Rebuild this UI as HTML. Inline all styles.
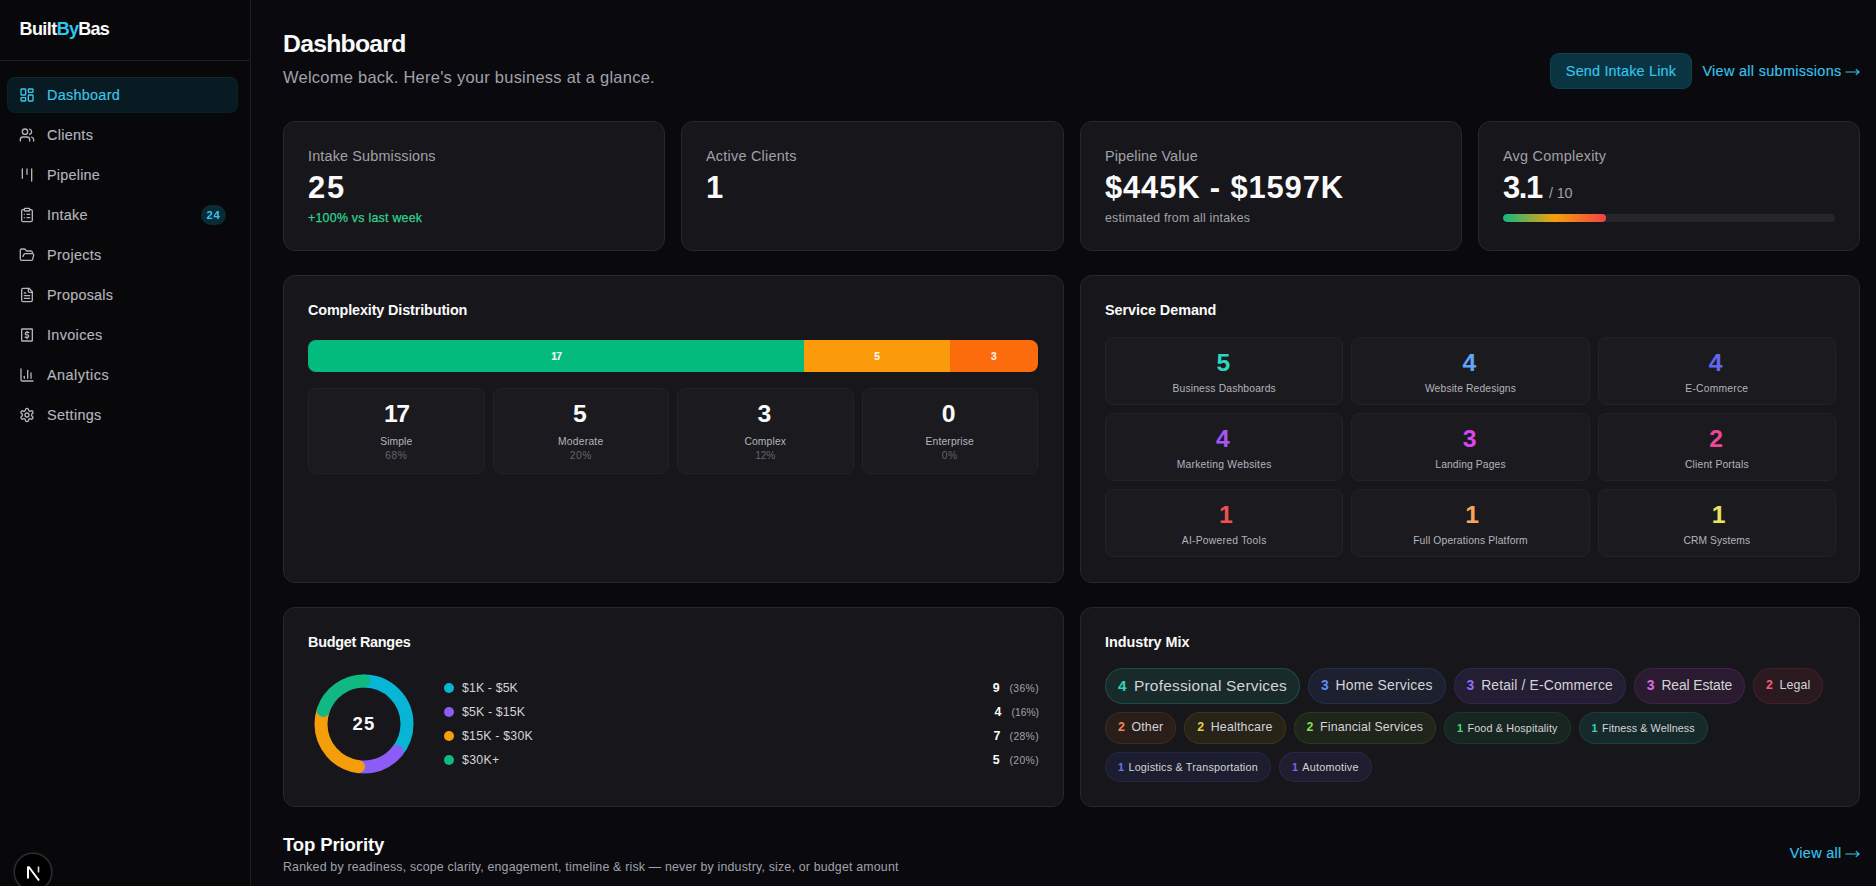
<!DOCTYPE html>
<html><head><meta charset="utf-8"><title>Dashboard</title>
<style>
*{box-sizing:border-box;margin:0;padding:0}
html,body{width:1876px;height:886px;overflow:hidden;background:#0a0a0e;font-family:"Liberation Sans",sans-serif;color:#fafafa}
.abs{position:absolute}
/* sidebar */
.sb{position:absolute;left:0;top:0;width:251px;height:886px;background:#08080b;border-right:1px solid #1d1d22}
.logo{position:absolute;left:19.5px;top:14.5px;height:28px;line-height:28px;font-size:18.03px;font-weight:700;letter-spacing:-0.3px;white-space:nowrap}
.logo .by{color:#2cc6ef}
.divh{position:absolute;left:0;top:60px;width:250px;height:1px;background:#1d1d22}
.nav{position:absolute;left:7px;top:77px;width:231px}
.ni{position:relative;height:36px;margin-bottom:4px;border-radius:8px;color:#b4b4bc}
.ni.act{background:#091b22;color:#3cc6e8;box-shadow:inset 0 1px 0 rgba(120,200,230,0.06),inset 0 0 0 1px rgba(34,211,238,0.03)}
.ni svg{position:absolute;left:12px;top:10px;width:16px;height:16px}
.ni .lb{position:absolute;left:40px;top:8px;line-height:20px;font-size:14.42px;font-weight:500;white-space:nowrap;-webkit-text-stroke:0.15px currentColor}
.badge{position:absolute;left:194px;top:8px;width:25px;height:20px;border-radius:10px;background:#0a2a34;color:#36c3ec;font-size:11.33px;font-weight:700;line-height:20px;text-align:center}
.nx{position:absolute;left:15px;top:854px;width:36px;height:36px;border-radius:50%;background:#000;box-shadow:0 0 0 1.5px #2c2c30,0 0 3px 1px rgba(60,60,66,0.5)}
/* main */
.h1{position:absolute;left:283px;top:28px;font-size:24.72px;line-height:32px;font-weight:700;letter-spacing:-0.6px;white-space:nowrap}
.sub{position:absolute;left:283px;top:64.5px;font-size:16.48px;line-height:24px;color:#a1a1aa;white-space:nowrap}
.btn{position:absolute;left:1550px;top:53px;width:142px;height:36px;border-radius:9px;background:#0b3442;box-shadow:inset 0 0 0 1px rgba(34,211,238,0.09);color:#36c3ec;-webkit-text-stroke:0.15px currentColor;font-size:14.42px;font-weight:500;line-height:36px;text-align:center;white-space:nowrap}
.lnk{position:absolute;right:16px;top:61px;font-size:14.42px;font-weight:500;line-height:20px;color:#36c3ec;-webkit-text-stroke:0.15px currentColor;white-space:nowrap}
.card{position:absolute;background:#17171b;border:1px solid #27272c;border-radius:12px}
.lab{font-size:14.42px;line-height:20px;color:#a1a1aa;white-space:nowrap}
.val{margin-top:4px;font-size:30.90px;line-height:36px;font-weight:700;white-space:nowrap}
.val small{font-size:14.42px;font-weight:400;color:#a1a1aa;margin-left:7px}
.note{margin-top:4px;font-size:12.36px;line-height:16px;color:#a1a1aa;white-space:nowrap}
.st{position:absolute;left:24px;top:24px}
.ttl{position:absolute;left:24px;top:24px;font-size:14.42px;line-height:20px;font-weight:600;white-space:nowrap}

.cbar{position:absolute;left:24px;top:64px;width:730px;height:32px;border-radius:8px;overflow:hidden;display:flex}
.cbar div{height:32px;text-align:center;font-size:10.30px;font-weight:700;line-height:34px;color:rgba(255,255,255,0.92);-webkit-text-stroke:0.2px currentColor}
.ctiles{position:absolute;left:24px;top:112px;width:730px;display:grid;grid-template-columns:repeat(4,1fr);gap:8px}
.ct{position:relative;height:86px;background:#1b1b1f;border:1px solid #232327;border-radius:8px;text-align:center}
.ct .n{position:absolute;left:0;right:0;top:9px;font-size:24.72px;line-height:32px;font-weight:700}
.ct .l{position:absolute;left:0;right:0;top:44.5px;font-size:10.30px;line-height:15px;color:#b4b4bc}
.ct .p{position:absolute;left:0;right:0;top:59px;font-size:10.30px;line-height:15px;color:#63636b}
.stiles{position:absolute;left:24px;top:61px;width:731px;display:grid;grid-template-columns:repeat(3,1fr);gap:8px}
.stl{position:relative;height:68px;background:#1b1b1f;border:1px solid #232327;border-radius:8px;text-align:center}
.stl .n{position:absolute;left:0;right:0;top:9px;font-size:24.72px;line-height:32px;font-weight:700}
.stl .l{position:absolute;left:0;right:0;top:42.5px;font-size:10.30px;line-height:15px;color:#b4b4bc;font-weight:500}
.leg{position:absolute;left:160px;top:67.5px;width:595px}
.lr{position:relative;height:24px}
.lr .d{position:absolute;left:0;top:7px;width:10px;height:10px;border-radius:50%}
.lr .t{position:absolute;left:18px;top:4px;font-size:12.36px;line-height:16px;color:#d4d4d8}
.lr .c{position:absolute;right:0;top:4px;line-height:16px;font-size:12.36px;white-space:nowrap}
.lr .c b{font-size:12.36px;font-weight:700;color:#fafafa}
.lr .c span{font-size:10.30px;color:#a1a1aa;margin-left:9px}
.pills{position:absolute;left:24px;top:60px;width:731px;display:flex;flex-wrap:wrap;gap:8px}
.pill{display:flex;align-items:center;gap:6px;padding:6px 12px;border-radius:9999px;border:1px solid;line-height:1.5;white-space:nowrap}
.pill b{font-weight:600}
.pill span{color:#d4d4d8}
.tp{position:absolute;left:283px;top:831px;font-size:18.54px;line-height:28px;font-weight:600;white-space:nowrap}
.tps{position:absolute;left:283px;top:859px;font-size:12.36px;line-height:16px;color:#a1a1aa;white-space:nowrap}
.va{position:absolute;right:16px;top:843px;font-size:14.42px;line-height:20px;font-weight:500;color:#36c3ec;-webkit-text-stroke:0.15px currentColor;white-space:nowrap}
.arr{display:inline-block;vertical-align:-1px;margin-left:3.5px}
.med{-webkit-text-stroke:0.15px currentColor}
</style></head>
<body>
<div class="sb">
  <div class="logo"><span style="letter-spacing: -0.572px;">Built</span><span class="by" style="letter-spacing: -0.738px;">By</span><span style="letter-spacing: -0.805px;">Bas</span></div>
  <div class="divh"></div>
  <div class="nav">
    <div class="ni act">
      <svg viewBox="0 0 24 24" fill="none" stroke="currentColor" stroke-width="2" stroke-linecap="round" stroke-linejoin="round"><rect x="3" y="3" width="7" height="9" rx="1"></rect><rect x="14" y="3" width="7" height="5" rx="1"></rect><rect x="14" y="12" width="7" height="9" rx="1"></rect><rect x="3" y="16" width="7" height="5" rx="1"></rect></svg>
      <span class="lb" style="letter-spacing: 0.281px;">Dashboard</span>
    </div>
    <div class="ni">
      <svg viewBox="0 0 24 24" fill="none" stroke="currentColor" stroke-width="2" stroke-linecap="round" stroke-linejoin="round"><path d="M16 21v-2a4 4 0 0 0-4-4H6a4 4 0 0 0-4 4v2"></path><circle cx="9" cy="7" r="4"></circle><path d="M22 21v-2a4 4 0 0 0-3-3.87"></path><path d="M16 3.13a4 4 0 0 1 0 7.75"></path></svg>
      <span class="lb" style="letter-spacing: 0.301px;">Clients</span>
    </div>
    <div class="ni">
      <svg viewBox="0 0 24 24" fill="none" stroke="currentColor" stroke-width="2" stroke-linecap="round" stroke-linejoin="round"><path d="M5 3v14"></path><path d="M12 3v8"></path><path d="M19 3v18"></path></svg>
      <span class="lb" style="letter-spacing: 0.229px;">Pipeline</span>
    </div>
    <div class="ni">
      <svg viewBox="0 0 24 24" fill="none" stroke="currentColor" stroke-width="2" stroke-linecap="round" stroke-linejoin="round"><rect x="8" y="2" width="8" height="4" rx="1"></rect><path d="M16 4h2a2 2 0 0 1 2 2v14a2 2 0 0 1-2 2H6a2 2 0 0 1-2-2V6a2 2 0 0 1 2-2h2"></path><path d="M12 11h4"></path><path d="M12 16h4"></path><path d="M8 11h.01"></path><path d="M8 16h.01"></path></svg>
      <span class="lb" style="letter-spacing: 0.253px;">Intake</span>
      <span class="badge" style="letter-spacing: 0.797px;">24</span>
    </div>
    <div class="ni">
      <svg viewBox="0 0 24 24" fill="none" stroke="currentColor" stroke-width="2" stroke-linecap="round" stroke-linejoin="round"><path d="m6 14 1.5-2.9A2 2 0 0 1 9.24 10H20a2 2 0 0 1 1.94 2.5l-1.54 6a2 2 0 0 1-1.95 1.5H4a2 2 0 0 1-2-2V5a2 2 0 0 1 2-2h3.9a2 2 0 0 1 1.69.9l.81 1.2a2 2 0 0 0 1.67.9H18a2 2 0 0 1 2 2v2"></path></svg>
      <span class="lb" style="letter-spacing: 0.32px;">Projects</span>
    </div>
    <div class="ni">
      <svg viewBox="0 0 24 24" fill="none" stroke="currentColor" stroke-width="2" stroke-linecap="round" stroke-linejoin="round"><path d="M15 2H6a2 2 0 0 0-2 2v16a2 2 0 0 0 2 2h12a2 2 0 0 0 2-2V7Z"></path><path d="M14 2v4a2 2 0 0 0 2 2h4"></path><path d="M10 9H8"></path><path d="M16 13H8"></path><path d="M16 17H8"></path></svg>
      <span class="lb" style="letter-spacing: 0.245px;">Proposals</span>
    </div>
    <div class="ni">
      <svg viewBox="0 0 24 24" fill="none" stroke="currentColor" stroke-width="2" stroke-linecap="round" stroke-linejoin="round"><rect x="4" y="3" width="16" height="18" rx="0.8"></rect><path d="M14.8 8.2h-3.6a1.8 1.8 0 0 0 0 3.6h1.6a1.8 1.8 0 0 1 0 3.6H9.2"></path><path d="M12 6.5v1.5"></path><path d="M12 15.5v2"></path></svg>
      <span class="lb" style="letter-spacing: 0.346px;">Invoices</span>
    </div>
    <div class="ni">
      <svg viewBox="0 0 24 24" fill="none" stroke="currentColor" stroke-width="2" stroke-linecap="round" stroke-linejoin="round"><path d="M3 3v16a2 2 0 0 0 2 2h16"></path><path d="M18 17V9"></path><path d="M13 17V5"></path><path d="M8 17v-3"></path></svg>
      <span class="lb" style="letter-spacing: 0.495px;">Analytics</span>
    </div>
    <div class="ni">
      <svg viewBox="0 0 24 24" fill="none" stroke="currentColor" stroke-width="2" stroke-linecap="round" stroke-linejoin="round"><path d="M12.22 2h-.44a2 2 0 0 0-2 2v.18a2 2 0 0 1-1 1.73l-.43.25a2 2 0 0 1-2 0l-.15-.08a2 2 0 0 0-2.73.73l-.22.38a2 2 0 0 0 .73 2.73l.15.1a2 2 0 0 1 1 1.72v.51a2 2 0 0 1-1 1.74l-.15.09a2 2 0 0 0-.73 2.73l.22.38a2 2 0 0 0 2.73.73l.15-.08a2 2 0 0 1 2 0l.43.25a2 2 0 0 1 1 1.73V20a2 2 0 0 0 2 2h.44a2 2 0 0 0 2-2v-.18a2 2 0 0 1 1-1.73l.43-.25a2 2 0 0 1 2 0l.15.08a2 2 0 0 0 2.73-.73l.22-.39a2 2 0 0 0-.73-2.73l-.15-.08a2 2 0 0 1-1-1.74v-.5a2 2 0 0 1 1-1.74l.15-.09a2 2 0 0 0 .73-2.73l-.22-.38a2 2 0 0 0-2.73-.73l-.15.08a2 2 0 0 1-2 0l-.43-.25a2 2 0 0 1-1-1.73V4a2 2 0 0 0-2-2z"></path><circle cx="12" cy="12" r="3"></circle></svg>
      <span class="lb" style="letter-spacing: 0.314px;">Settings</span>
    </div>
  </div>
  <div class="nx"><svg viewBox="0 0 37 37" width="37" height="37"><path d="M13 12.5v12" stroke="#fff" stroke-width="2" fill="none"></path><path d="M13.5 12.5l10.5 14" stroke="#fff" stroke-width="2" fill="none"></path><path d="M23.5 12.5v6" stroke="#ddd" stroke-width="1.6" fill="none"></path></svg></div>
</div>

<div class="h1" style="letter-spacing: -0.725px;">Dashboard</div>
<div class="sub" style="letter-spacing: 0.257px;">Welcome back. Here's your business at a glance.</div>
<div class="btn" style="letter-spacing: 0.184px;">Send Intake Link</div>
<div class="lnk"><span style="letter-spacing: 0.323px;">View all submissions</span><svg class="arr" width="15" height="10" viewBox="0 0 15 10"><path d="M0.5 5h13.8M10.8 2.2l3.3 2.8-3.3 2.8" stroke="currentColor" stroke-width="1.1" fill="none"></path></svg></div>

<!-- stat cards -->
<div class="card" style="left:283px;top:121px;width:382px;height:130px">
  <div class="st"><div class="lab" style="letter-spacing: 0.156px;">Intake Submissions</div><div class="val" style="letter-spacing: 1.852px;">25</div><div class="note" style="color: rgb(48, 207, 144); font-weight: 500; -webkit-text-stroke: 0.25px currentcolor; letter-spacing: 0.263px;">+100% vs last week</div></div>
</div>
<div class="card" style="left:681px;top:121px;width:383px;height:130px">
  <div class="st"><div class="lab" style="letter-spacing: 0.238px;">Active Clients</div><div class="val" style="letter-spacing: -4.25px;">1</div></div>
</div>
<div class="card" style="left:1080px;top:121px;width:382px;height:130px">
  <div class="st"><div class="lab" style="letter-spacing: 0.129px;">Pipeline Value</div><div class="val" style="letter-spacing: 0.872px;">$445K - $1597K</div><div class="note" style="letter-spacing: 0.19px;">estimated from all intakes</div></div>
</div>
<div class="card" style="left:1478px;top:121px;width:382px;height:130px">
  <div class="st"><div class="lab" style="letter-spacing: 0.247px;">Avg Complexity</div><div class="val"><span style="letter-spacing: -1.323px;">3.1</span><small style="letter-spacing: -0.129px;">/ 10</small></div></div>
  <div class="abs" style="left:24px;top:92px;width:332px;height:8px;border-radius:4px;background:#26262b;overflow:hidden"><div style="width:31%;height:8px;border-radius:4px;background:linear-gradient(90deg,#10b981,#f59e0b,#ef4444)"></div></div>
</div>


<!-- row 2 -->
<div class="card" style="left:283px;top:275px;width:781px;height:308px">
  <div class="ttl" style="letter-spacing: -0.141px;">Complexity Distribution</div>
  <div class="cbar"><div style="width: 68%; background: rgb(4, 187, 126); letter-spacing: -0.664px;">17</div><div style="width: 20%; background: rgb(251, 155, 11); letter-spacing: 0.672px;">5</div><div style="width: 12%; background: rgb(253, 108, 12); letter-spacing: 0.734px;">3</div></div>
  <div class="ctiles"><div class="ct"><div class="n" style="letter-spacing: -1.594px;">17</div><div class="l" style="letter-spacing: 0.083px;">Simple</div><div class="p" style="letter-spacing: 0.536px;">68%</div></div><div class="ct"><div class="n" style="letter-spacing: 1.594px;">5</div><div class="l" style="letter-spacing: 0.232px;">Moderate</div><div class="p" style="letter-spacing: 0.542px;">20%</div></div><div class="ct"><div class="n" style="letter-spacing: 1.75px;">3</div><div class="l" style="letter-spacing: 0.147px;">Complex</div><div class="p" style="letter-spacing: -0.203px;">12%</div></div><div class="ct"><div class="n" style="letter-spacing: 2.438px;">0</div><div class="l" style="letter-spacing: 0.148px;">Enterprise</div><div class="p" style="letter-spacing: 0.625px;">0%</div></div></div>
</div>
<div class="card" style="left:1080px;top:275px;width:780px;height:308px">
  <div class="ttl" style="letter-spacing: -0.055px;">Service Demand</div>
  <div class="stiles"><div class="stl"><div class="n" style="color: rgb(45, 212, 191); letter-spacing: 1.594px;">5</div><div class="l" style="letter-spacing: 0.168px;">Business Dashboards</div></div><div class="stl"><div class="n" style="color: rgb(96, 165, 250); letter-spacing: 2.484px;">4</div><div class="l" style="letter-spacing: 0.152px;">Website Redesigns</div></div><div class="stl"><div class="n" style="color: rgb(99, 102, 241); letter-spacing: 2.484px;">4</div><div class="l" style="letter-spacing: 0.234px;">E-Commerce</div></div><div class="stl"><div class="n" style="color: rgb(168, 85, 247); letter-spacing: 2.484px;">4</div><div class="l" style="letter-spacing: 0.26px;">Marketing Websites</div></div><div class="stl"><div class="n" style="color: rgb(217, 70, 239); letter-spacing: 1.75px;">3</div><div class="l" style="letter-spacing: 0.132px;">Landing Pages</div></div><div class="stl"><div class="n" style="color: rgb(236, 72, 153); letter-spacing: 1.375px;">2</div><div class="l" style="letter-spacing: 0.184px;">Client Portals</div></div><div class="stl"><div class="n" style="color: rgb(236, 82, 82); letter-spacing: -3.391px;">1</div><div class="l" style="letter-spacing: 0.268px;">AI-Powered Tools</div></div><div class="stl"><div class="n" style="color: rgb(249, 165, 92); letter-spacing: -3.391px;">1</div><div class="l" style="letter-spacing: 0.154px;">Full Operations Platform</div></div><div class="stl"><div class="n" style="color: rgb(237, 227, 94); letter-spacing: -3.391px;">1</div><div class="l" style="letter-spacing: 0.078px;">CRM Systems</div></div></div>
</div>
<!-- row 3 -->
<div class="card" style="left:283px;top:607px;width:781px;height:200px">
  <div class="ttl" style="letter-spacing: -0.248px;">Budget Ranges</div>
  <svg class="abs" style="left:24px;top:60px" width="112" height="112" viewBox="0 0 112 112"><circle cx="56" cy="56" r="43" fill="none" stroke="#06b6d4" stroke-width="13" stroke-linecap="round" stroke-dasharray="97.264 270.177" stroke-dashoffset="0.000" transform="rotate(-90 56 56)"></circle><circle cx="56" cy="56" r="43" fill="none" stroke="#8b5cf6" stroke-width="13" stroke-linecap="round" stroke-dasharray="43.228 270.177" stroke-dashoffset="-97.264" transform="rotate(-90 56 56)"></circle><circle cx="56" cy="56" r="43" fill="none" stroke="#f59e0b" stroke-width="13" stroke-linecap="round" stroke-dasharray="75.650 270.177" stroke-dashoffset="-140.492" transform="rotate(-90 56 56)"></circle><circle cx="56" cy="56" r="43" fill="none" stroke="#10b981" stroke-width="13" stroke-linecap="round" stroke-dasharray="54.035 270.177" stroke-dashoffset="-216.142" transform="rotate(-90 56 56)"></circle></svg>
  <div class="abs" style="left: 24px; top: 60px; width: 112px; height: 112px; text-align: center; line-height: 112px; font-size: 18.54px; font-weight: 700; letter-spacing: 1.109px;">25</div>
  <div class="leg"><div class="lr"><div class="d" style="background:#06b6d4"></div><div class="t" style="letter-spacing: 0.111px;">$1K - $5K</div><div class="c"><b style="letter-spacing: 0.922px;">9</b><span style="letter-spacing: 0.406px;">(36%)</span></div></div><div class="lr"><div class="d" style="background:#8b5cf6"></div><div class="t" style="letter-spacing: 0.142px;">$5K - $15K</div><div class="c"><b style="letter-spacing: 1.25px;">4</b><span style="letter-spacing: -0.016px;">(16%)</span></div></div><div class="lr"><div class="d" style="background:#f59e0b"></div><div class="t" style="letter-spacing: 0.203px;">$15K - $30K</div><div class="c"><b style="letter-spacing: 0.109px;">7</b><span style="letter-spacing: 0.388px;">(28%)</span></div></div><div class="lr"><div class="d" style="background:#10b981"></div><div class="t" style="letter-spacing: 0.259px;">$30K+</div><div class="c"><b style="letter-spacing: 0.797px;">5</b><span style="letter-spacing: 0.412px;">(20%)</span></div></div></div>
</div>
<div class="card" style="left:1080px;top:607px;width:780px;height:200px">
  <div class="ttl" style="letter-spacing: -0.033px;">Industry Mix</div>
  <div class="pills"><div class="pill" style="font-size:15.45px;line-height:22.00px;background:rgba(45,212,191,0.1);border-color:rgba(45,212,191,0.2)"><b style="color: rgb(45, 212, 191); letter-spacing: 1.406px;">4</b><span style="letter-spacing: 0.217px;">Professional Services</span></div><div class="pill" style="font-size:13.91px;line-height:19.75px;background:rgba(96,135,250,0.09);border-color:rgba(96,135,250,0.13)"><b style="color: rgb(95, 140, 248); letter-spacing: 0.859px;">3</b><span style="letter-spacing: 0.209px;">Home Services</span></div><div class="pill" style="font-size:13.91px;line-height:19.75px;background:rgba(139,92,246,0.11);border-color:rgba(139,92,246,0.14)"><b style="color: rgb(139, 111, 246); letter-spacing: 0.859px;">3</b><span style="letter-spacing: 0.137px;">Retail / E-Commerce</span></div><div class="pill" style="font-size:13.91px;line-height:19.75px;background:rgba(217,70,239,0.1);border-color:rgba(217,70,239,0.13)"><b style="color: rgb(224, 102, 234); letter-spacing: 0.859px;">3</b><span style="letter-spacing: -0.116px;">Real Estate</span></div><div class="pill" style="font-size:12.36px;line-height:17.50px;background:rgba(244,63,94,0.09);border-color:rgba(244,63,94,0.13)"><b style="color: rgb(243, 93, 124); letter-spacing: 0.609px;">2</b><span style="letter-spacing: 0.109px;">Legal</span></div><div class="pill" style="font-size:12.36px;line-height:17.50px;background:rgba(249,115,22,0.08);border-color:rgba(249,115,22,0.13)"><b style="color: rgb(245, 133, 92); letter-spacing: 0.609px;">2</b><span style="letter-spacing: 0.159px;">Other</span></div><div class="pill" style="font-size:12.36px;line-height:17.50px;background:rgba(234,179,8,0.08);border-color:rgba(234,179,8,0.13)"><b style="color: rgb(232, 207, 66); letter-spacing: 0.609px;">2</b><span style="letter-spacing: 0.212px;">Healthcare</span></div><div class="pill" style="font-size:12.36px;line-height:17.50px;background:rgba(132,204,22,0.08);border-color:rgba(132,204,22,0.13)"><b style="color: rgb(134, 223, 78); letter-spacing: 0.609px;">2</b><span style="letter-spacing: 0.147px;">Financial Services</span></div><div class="pill" style="font-size:10.81px;line-height:16px;background:rgba(34,197,94,0.09);border-color:rgba(34,197,94,0.13)"><b style="color: rgb(74, 222, 128); letter-spacing: -1.563px;">1</b><span style="letter-spacing: 0.138px;">Food &amp; Hospitality</span></div><div class="pill" style="font-size:10.81px;line-height:16px;background:rgba(20,184,166,0.12);border-color:rgba(20,184,166,0.16)"><b style="color: rgb(45, 212, 191); letter-spacing: -1.563px;">1</b><span style="letter-spacing: 0.06px;">Fitness &amp; Wellness</span></div><div class="pill" style="font-size:10.81px;line-height:16px;background:rgba(79,100,240,0.1);border-color:rgba(79,100,240,0.13)"><b style="color: rgb(100, 120, 238); letter-spacing: -1.563px;">1</b><span style="letter-spacing: 0.2px;">Logistics &amp; Transportation</span></div><div class="pill" style="font-size:10.81px;line-height:16px;background:rgba(124,92,240,0.1);border-color:rgba(124,92,240,0.13)"><b style="color: rgb(127, 96, 234); letter-spacing: -1.563px;">1</b><span style="letter-spacing: 0.236px;">Automotive</span></div></div>
</div>
<div class="tp" style="letter-spacing: -0.12px;">Top Priority</div>
<div class="tps" style="letter-spacing: 0.191px;">Ranked by readiness, scope clarity, engagement, timeline &amp; risk — never by industry, size, or budget amount</div>
<div class="va"><span style="letter-spacing: 0.301px;">View all</span><svg class="arr" width="15" height="10" viewBox="0 0 15 10"><path d="M0.5 5h13.8M10.8 2.2l3.3 2.8-3.3 2.8" stroke="currentColor" stroke-width="1.1" fill="none"></path></svg></div>

</body></html>
